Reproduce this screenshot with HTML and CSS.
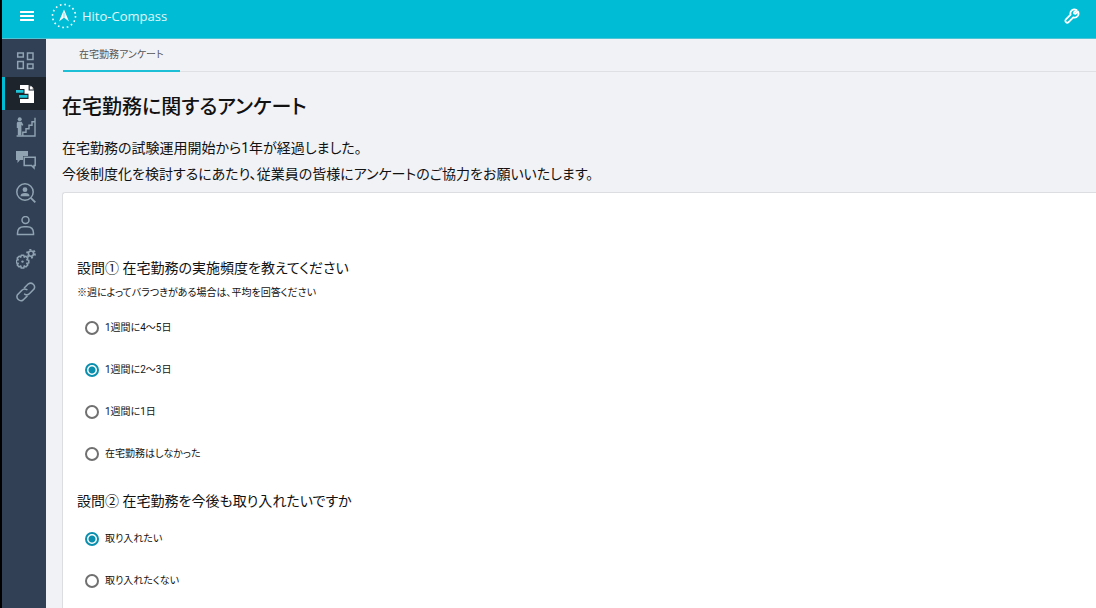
FILE: index.html
```html
<!DOCTYPE html>
<html lang="ja">

<head>
    <meta charset="UTF-8">
    <meta name="viewport" content="width=device-width, initial-scale=1.0">
    <title>Hito-Compass</title>
    <link rel="stylesheet" href="styles.css">
</head>

<body>
    <header class="header">
        <button type="button" class="menu-btn" aria-label="メニュー">
            <svg width="14" height="12" viewBox="0 0 14 12"><path d="M0 2h14M0 6h14M0 10h14" stroke="#fff" stroke-width="2"/></svg>
        </button>
        <a href="#" class="logo">
            <svg width="26" height="26" viewBox="0 0 26 26">
                <circle cx="13" cy="13" r="11.5" fill="none" stroke="#fff" stroke-width="1.6" stroke-dasharray="1.6 2.916"/>
                <path d="M13 6.5L18 18.5L13 14.5L8 18.5Z" fill="#fff"/>
                <path d="M13 14.5V10" stroke="#00bcd4" stroke-width="0.6"/>
            </svg>
            <span>Hito-Compass</span>
        </a>
        <button type="button" class="tool-btn" aria-label="設定">
            <svg width="16" height="16" viewBox="0 0 16 16" fill="none" stroke="#fff" stroke-width="1.8" stroke-linejoin="round">
                <path d="M12.6 2.1A4 4 0 0 0 6.6 6.7L1.9 11.4A1.9 1.9 0 0 0 4.6 14.1L9.3 9.4A4 4 0 0 0 13.9 3.5L11.5 5.9L10.1 5.5L9.9 4.5Z"/>
            </svg>
        </button>
    </header>
    <div class="container">
        <nav class="sidebar">
            <a href="#" aria-label="ダッシュボード">
                <svg width="20" height="20" viewBox="0 0 20 20" fill="none" stroke="#8fa3b2" stroke-width="1.5">
                    <path d="M1.7 2h5.6v4H1.7zM11.5 2H17v6.5h-5.5zM1.7 10.5h5.6v7H1.7zM11.5 13H17v4.5h-5.5z"/>
                </svg>
            </a>
            <a href="#" class="active" aria-label="アンケート">
                <svg width="20" height="20" viewBox="0 0 20 20">
                    <path d="M4 1H13L18 6V19H4Z" fill="#fff"/>
                    <path d="M13.2 0V6H19" fill="none" stroke="#1d242c" stroke-width="1.2"/>
                    <path d="M14.6 1.4V4.6H17.8Z" fill="#fff"/>
                    <path d="M3 5H8.5V9.8H12.5V15H3Z" fill="#1d242c"/>
                    <path d="M0 6h7.5v2.8H0zM3 11h8.5v2.8H3z" fill="#1fc3d8"/>
                </svg>
            </a>
            <a href="#" aria-label="キャリア">
                <svg width="20" height="20" viewBox="0 0 20 20" fill="none" stroke="#8fa3b2" stroke-width="1.4">
                    <circle cx="3.7" cy="2.3" r="2" fill="#8fa3b2" stroke="none"/>
                    <path d="M1.6 4.8H5.6L7.4 8L6.2 8.8L5.4 7.8V18.5H1.8V11H.8V6z" fill="#8fa3b2" stroke="none"/>
                    <path d="M.6 19H19V.8M6.8 18.5V15.2H10V11.7H13V8.2H16V4.7H19"/>
                </svg>
            </a>
            <a href="#" aria-label="メッセージ">
                <svg width="20" height="20" viewBox="0 0 20 20">
                    <path d="M0 1H12V6H7V10H4L1.5 13V10H0Z" fill="#8fa3b2"/>
                    <path d="M8.2 7.3H19.2V15.5H18V18L15.5 15.5H8.2Z" fill="none" stroke="#8fa3b2" stroke-width="1.5"/>
                </svg>
            </a>
            <a href="#" aria-label="人材検索">
                <svg width="20" height="20" viewBox="0 0 20 20" fill="none" stroke="#8fa3b2" stroke-width="1.5">
                    <circle cx="9" cy="9" r="8.2"/>
                    <circle cx="9" cy="6.7" r="2.4" fill="#8fa3b2" stroke="none"/>
                    <path d="M4.5 13.2Q4.5 10 9 10T13.5 13.2Z" fill="#8fa3b2" stroke="none"/>
                    <path d="M14.8 14.8L19.3 19.3" stroke-width="1.9"/>
                </svg>
            </a>
            <a href="#" aria-label="プロフィール">
                <svg width="20" height="20" viewBox="0 0 20 20" fill="none" stroke="#8fa3b2" stroke-width="1.5">
                    <circle cx="9.5" cy="4" r="3.5"/>
                    <path d="M1.5 18.6V17.3Q1.5 10.8 8 10.8H11Q17.5 10.8 17.5 17.3V18.6Z"/>
                </svg>
            </a>
            <a href="#" aria-label="管理">
                <svg width="20" height="20" viewBox="0 0 20 20" fill="none" stroke="#8fa3b2" stroke-linejoin="round">
                    <path d="M5.2 6.2H7.8L8.2 8.2L9.9 7.2L11.8 9.1L10.8 10.8L12.8 11.2V13.9L10.8 14.3L11.8 16L9.9 17.9L8.2 16.9L7.8 19H5.2L4.8 16.9L3.1 17.9L1.2 16L2.2 14.3L.4 13.9V11.2L2.2 10.8L1.2 9.1L3.1 7.2L4.8 8.2Z" stroke-width="1.5"/>
                    <circle cx="6.5" cy="12.6" r="1.2" fill="#8fa3b2" stroke="none"/>
                    <circle cx="15" cy="4.6" r="2.6" stroke-width="1.6"/>
                    <circle cx="15" cy="4.6" r="4" stroke-width="1.8" stroke-dasharray="2 2.19"/>
                </svg>
            </a>
            <a href="#" aria-label="リンク">
                <svg width="20" height="20" viewBox="1.5 1.5 21 21" fill="none" stroke="#8fa3b2" stroke-width="1.6" stroke-linecap="round">
                    <path d="M10.6 14.2A4.2 4.2 0 0 0 15.8 13.6L20.4 9A4.2 4.2 0 0 0 14.5 3.4L10.4 7.5"/>
                    <path d="M12.9 9.6A4.2 4.2 0 0 0 7.7 10.2L3.1 14.8A4.2 4.2 0 0 0 9 20.4L13.1 16.3"/>
                </svg>
            </a>
        </nav>
        <main class="main">
            <div class="tabs">
                <a href="#" class="tab">在宅勤務アンケート</a>
            </div>
            <h1 class="title">在宅勤務に関するアンケート</h1>
            <p class="lead">在宅勤務の試験運用開始から1年が経過しました。<br>今後制度化を検討するにあたり、従業員の皆様にアンケートのご協力をお願いいたします。</p>
            <form class="card">
                <fieldset class="question">
                    <legend>設問① 在宅勤務の実施頻度を教えてください</legend>
                    <p class="note">※週によってバラつきがある場合は、平均を回答ください</p>
                    <label class="option"><input type="radio" name="q1">1週間に4～5日</label>
                    <label class="option"><input type="radio" name="q1" checked>1週間に2～3日</label>
                    <label class="option"><input type="radio" name="q1">1週間に1日</label>
                    <label class="option"><input type="radio" name="q1">在宅勤務はしなかった</label>
                </fieldset>
                <fieldset class="question">
                    <legend>設問② 在宅勤務を今後も取り入れたいですか</legend>
                    <label class="option"><input type="radio" name="q2" checked>取り入れたい</label>
                    <label class="option"><input type="radio" name="q2">取り入れたくない</label>
                </fieldset>
            </form>
        </main>
    </div>
</body>

</html>
```

FILE: styles.css
```css
* {
    box-sizing: border-box;
}

body {
    display: flex;
    flex-direction: column;
    min-height: 100vh;
    margin: 0;
    border-left: 2px solid #000;
    background-color: #f1f2f6;
    color: #111;
    font-family: Roboto, "Noto Sans CJK JP", sans-serif;
    font-size: 14px;
    font-feature-settings: "palt";
}

button {
    display: flex;
    padding: 0;
    border: 0;
    background: none;
}

svg {
    display: block;
}

.header {
    display: flex;
    align-items: center;
    height: 39px;
    padding: 0 16px 6px 18px;
    border-bottom: 1px solid #4fc4d4;
    background-color: #00bcd4;
}

.logo {
    display: flex;
    align-items: center;
    gap: 5px;
    margin-left: 17px;
    color: #e0f7fa;
    font-family: "Open Sans", sans-serif;
    font-size: 13px;
    text-decoration: none;
}

.tool-btn {
    margin-left: auto;
}

.container {
    display: flex;
    flex: 1;
}

.sidebar {
    flex: none;
    width: 44px;
    padding-top: 5px;
    background-color: #324056;
}

.sidebar a {
    display: flex;
    align-items: center;
    height: 33px;
    padding-left: 14px;
}

.sidebar .active {
    padding-left: 11px;
    border-left: 3px solid #00bcd4;
    background-color: #1d242c;
}

.main {
    display: flex;
    flex-direction: column;
    flex: 1;
    min-width: 0;
    padding-left: 16px;
}

.tabs {
    display: flex;
    height: 33px;
    margin-left: 1px;
    box-shadow: inset 0 -1px #dfe0e4;
}

.tab {
    padding: 0 16px;
    border-bottom: 2px solid #1cbfd6;
    color: #555;
    font-size: 10px;
    line-height: 32px;
    text-decoration: none;
}

.title {
    margin: 21px 0 0;
    font-size: 20px;
    font-weight: 500;
    line-height: 28px;
}

.lead {
    margin: 14px 0 5px;
    line-height: 26px;
}

.card {
    flex: 1;
    padding: 63px 14px 0;
    border: 1px solid #dcdde1;
    border-width: 1px 0 0 1px;
    border-radius: 3px 0 0 0;
    background-color: #fff;
}

.question {
    min-width: 0;
    margin: 0 0 14px;
    padding: 0;
    border: 0;
}

.question legend {
    padding: 0 0 5px;
    line-height: 24px;
}

.note {
    margin: 0 0 6px;
    font-size: 10px;
    line-height: 16px;
}

.option {
    display: flex;
    align-items: center;
    gap: 6px;
    height: 42px;
    padding-left: 8px;
    font-size: 10px;
    line-height: 14px;
}

.option input {
    appearance: none;
    width: 14px;
    height: 14px;
    margin: 0;
    border: 2px solid #707070;
    border-radius: 50%;
}

.option input:checked {
    border: 2px solid #0a8fae;
    background: radial-gradient(circle, #0a8fae 3px, #fff 4px);
}
```
